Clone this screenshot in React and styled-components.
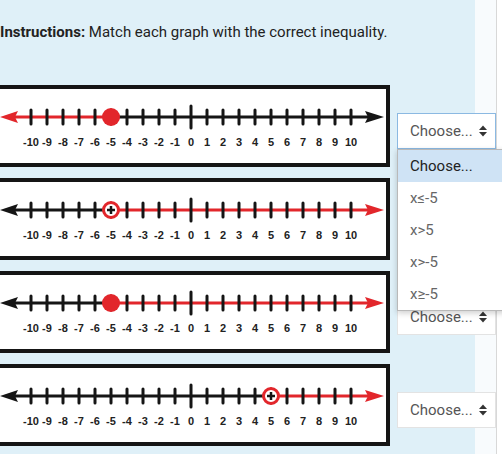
import React from 'react';
import styled, { createGlobalStyle } from 'styled-components';

const RED = '#e2262b';
const INK = '#151515';

const GlobalStyle = createGlobalStyle`
  html, body {
    margin: 0;
    padding: 0;
  }
  body {
    width: 502px;
    height: 454px;
    overflow: hidden;
    font-family: Roboto, "Liberation Sans", sans-serif;
    background: linear-gradient(
      to right,
      #dff0f8 0 475px,
      #f8fbfd 475px 496px,
      #d8d8d8 496px 497px,
      #ffffff 497px
    );
  }
`;

const Page = styled.div`
  padding-top: 22px;
`;

const Instructions = styled.p`
  margin: 0 0 43px;
  font-size: 15px;
  line-height: 20px;
  color: #222;
  white-space: nowrap;

  b {
    font-weight: 700;
  }
`;

const List = styled.div`
  display: flex;
  flex-direction: column;
  gap: 11px;
`;

const Row = styled.div`
  display: flex;
  align-items: flex-start;
  gap: 7px;
`;

const GraphBox = styled.div`
  flex: none;
  width: 390px;
  height: 82px;
  box-sizing: border-box;
  border: 4px solid ${INK};
  border-left: none;
  background: #fff;

  svg {
    display: block;
  }
`;

const SelectWrap = styled.div`
  position: relative;
  margin-top: 28px;
`;

const SelectBox = styled.div`
  width: 99px;
  height: 36px;
  box-sizing: border-box;
  border: 1px solid ${(p) => (p.$focused ? '#8bb9e2' : '#e3e3e3')};
  background: #fff;
  display: flex;
  align-items: center;
  justify-content: space-between;
  padding: 0 8px 0 12px;
  font-size: 15px;
  color: #555;
`;

const Menu = styled.div`
  position: absolute;
  top: 36px;
  left: 0;
  width: 130px;
  background: #fff;
  border: 1px solid #b9b9b9;
  box-shadow: 0 2px 6px rgba(0, 0, 0, 0.2);
  z-index: 2;
`;

const Option = styled.div`
  height: 32px;
  display: flex;
  align-items: center;
  padding-left: 12px;
  font-size: 15px;
  color: ${(p) => (p.$active ? '#222' : '#666')};
  background: ${(p) => (p.$active ? '#cfe3f5' : 'transparent')};
`;

const OPTIONS = ['Choose...', 'x≤-5', 'x>5', 'x>-5', 'x≥-5'];

const GRAPHS = [
  { at: -5, dir: 'left', open: false },
  { at: -5, dir: 'right', open: true },
  { at: -5, dir: 'right', open: false },
  { at: 5, dir: 'right', open: true },
];

const xOf = (v) => 191 + 16 * v;

function NumberLine({ at, dir, open }) {
  const y = 28;
  const px = xOf(at);
  const leftColor = dir === 'left' ? RED : INK;
  const rightColor = dir === 'right' ? RED : INK;
  const values = Array.from({ length: 21 }, (_, i) => i - 10);

  return (
    <svg width="386" height="74" viewBox="0 0 386 74">
      <line x1="12" y1={y} x2={px} y2={y} stroke={leftColor} strokeWidth="3" />
      <polygon points={`0,${y} 18,${y - 6} 15,${y} 18,${y + 6}`} fill={leftColor} />
      <line x1={px} y1={y} x2="370" y2={y} stroke={rightColor} strokeWidth="3" />
      <polygon points={`384,${y} 365,${y - 6} 368,${y} 365,${y + 6}`} fill={rightColor} />
      {values.map((v) => (
        <line
          key={v}
          x1={xOf(v)}
          x2={xOf(v)}
          y1={v === 0 ? y - 11 : y - 7}
          y2={v === 0 ? y + 11 : y + 7}
          stroke={INK}
          strokeWidth="3"
          strokeLinecap="round"
        />
      ))}
      {open ? (
        <g>
          <circle cx={px} cy={y} r="7.5" fill="#fff" stroke={RED} strokeWidth="3" />
          <line x1={px} x2={px} y1={y - 4} y2={y + 4} stroke={INK} strokeWidth="2.5" />
          <line x1={px - 4} x2={px + 4} y1={y} y2={y} stroke={INK} strokeWidth="2.5" />
        </g>
      ) : (
        <circle cx={px} cy={y} r="9" fill={RED} />
      )}
      {values.map((v) => (
        <text
          key={v}
          x={xOf(v)}
          y="57"
          textAnchor="middle"
          fontFamily="'Liberation Sans', Arial, sans-serif"
          fontWeight="700"
          fontSize="11"
          fill="#222"
        >
          {v}
        </text>
      ))}
    </svg>
  );
}

const Caret = () => (
  <svg width="8" height="12" viewBox="0 0 8 12">
    <polygon points="0,5 4,0.5 8,5" fill="#333" />
    <polygon points="0,7 4,11.5 8,7" fill="#333" />
  </svg>
);

export default function App() {
  return (
    <Page>
      <GlobalStyle />
      <Instructions>
        <b>Instructions:</b> Match each graph with the correct inequality.
      </Instructions>
      <List>
        {GRAPHS.map((g, i) => (
          <Row key={i}>
            <GraphBox>
              <NumberLine {...g} />
            </GraphBox>
            <SelectWrap>
              <SelectBox $focused={i === 0}>
                <span>Choose...</span>
                <Caret />
              </SelectBox>
              {i === 0 && (
                <Menu>
                  {OPTIONS.map((o, j) => (
                    <Option key={o} $active={j === 0}>
                      {o}
                    </Option>
                  ))}
                </Menu>
              )}
            </SelectWrap>
          </Row>
        ))}
      </List>
    </Page>
  );
}
